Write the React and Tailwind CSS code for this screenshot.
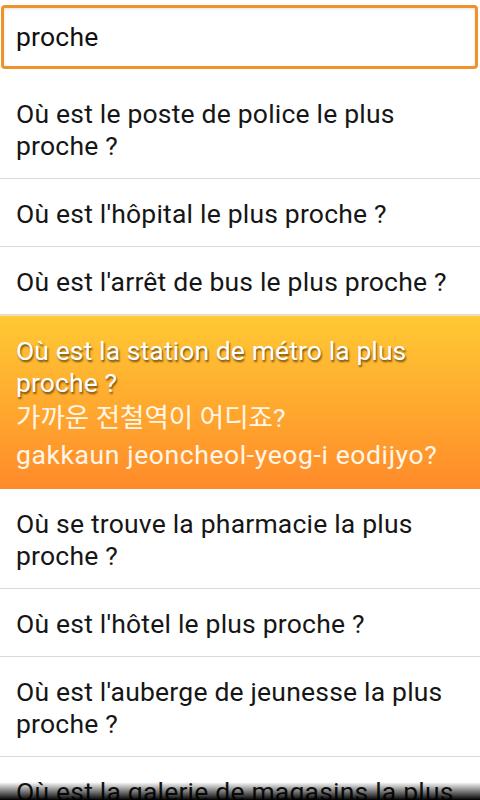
import React from "react";

const items = [
  { fr: "Où est le poste de police le plus proche ?" },
  { fr: "Où est l'hôpital le plus proche ?" },
  { fr: "Où est l'arrêt de bus le plus proche ?" },
  {
    fr: "Où est la station de métro la plus proche ?",
    ko: "가까운 전철역이 어디죠?",
    rom: "gakkaun jeoncheol-yeog-i eodijyo?",
  },
  { fr: "Où se trouve la pharmacie la plus proche ?" },
  { fr: "Où est l'hôtel le plus proche ?" },
  { fr: "Où est l'auberge de jeunesse la plus proche ?" },
  { fr: "Où est la galerie de magasins la plus proche ?" },
];

function Row({ item }) {
  if (item.ko) {
    return (
      <li className="bg-linear-to-b from-[#ffc934] to-[#ff8a2a] border-t border-[#f3e3b0] pt-[19px] pb-[16px] pl-[16px] pr-[20px]">
        <p className="text-[26.5px] leading-[32px] tracking-[0.1px] text-white [text-shadow:1px_2px_2px_rgba(70,40,0,0.75)]">
          {item.fr}
        </p>
        <p className="text-[26.5px] leading-[37px] text-[#fff6e8] font-['Roboto','Noto_Sans_CJK_KR',sans-serif]">
          {item.ko}
        </p>
        <p className="text-[26.5px] leading-[37px] tracking-[0.6px] text-[#fff6e8]">
          {item.rom}
        </p>
      </li>
    );
  }
  return (
    <li className="border-b border-[#dadada] pt-[19px] pb-[16px] pl-[16px] pr-[20px]">
      <p className="text-[26.5px] leading-[32px] tracking-[0.2px] text-[#161616]">{item.fr}</p>
    </li>
  );
}

export default function App() {
  return (
    <div className="relative w-[480px] h-[800px] overflow-hidden bg-white font-['Roboto',sans-serif]">
      {/* search field */}
      <div className="pt-[5px] pb-[10px] pl-[1px] pr-[2px]">
        <div className="h-[64px] border-[3px] border-[#ef922b] rounded-[4px] bg-white shadow-[inset_0_1px_3px_rgba(0,0,0,0.12)] flex items-center pl-[12px]">
          <span className="text-[26.5px] tracking-[0.2px] text-[#111] leading-none">proche</span>
        </div>
      </div>

      <ul>
        {items.map((item, i) => (
          <Row key={i} item={item} />
        ))}
      </ul>

      {/* bottom edge fade */}
      <div className="absolute left-0 right-0 bottom-0 h-[18px] bg-linear-to-b from-transparent to-black" />
    </div>
  );
}
